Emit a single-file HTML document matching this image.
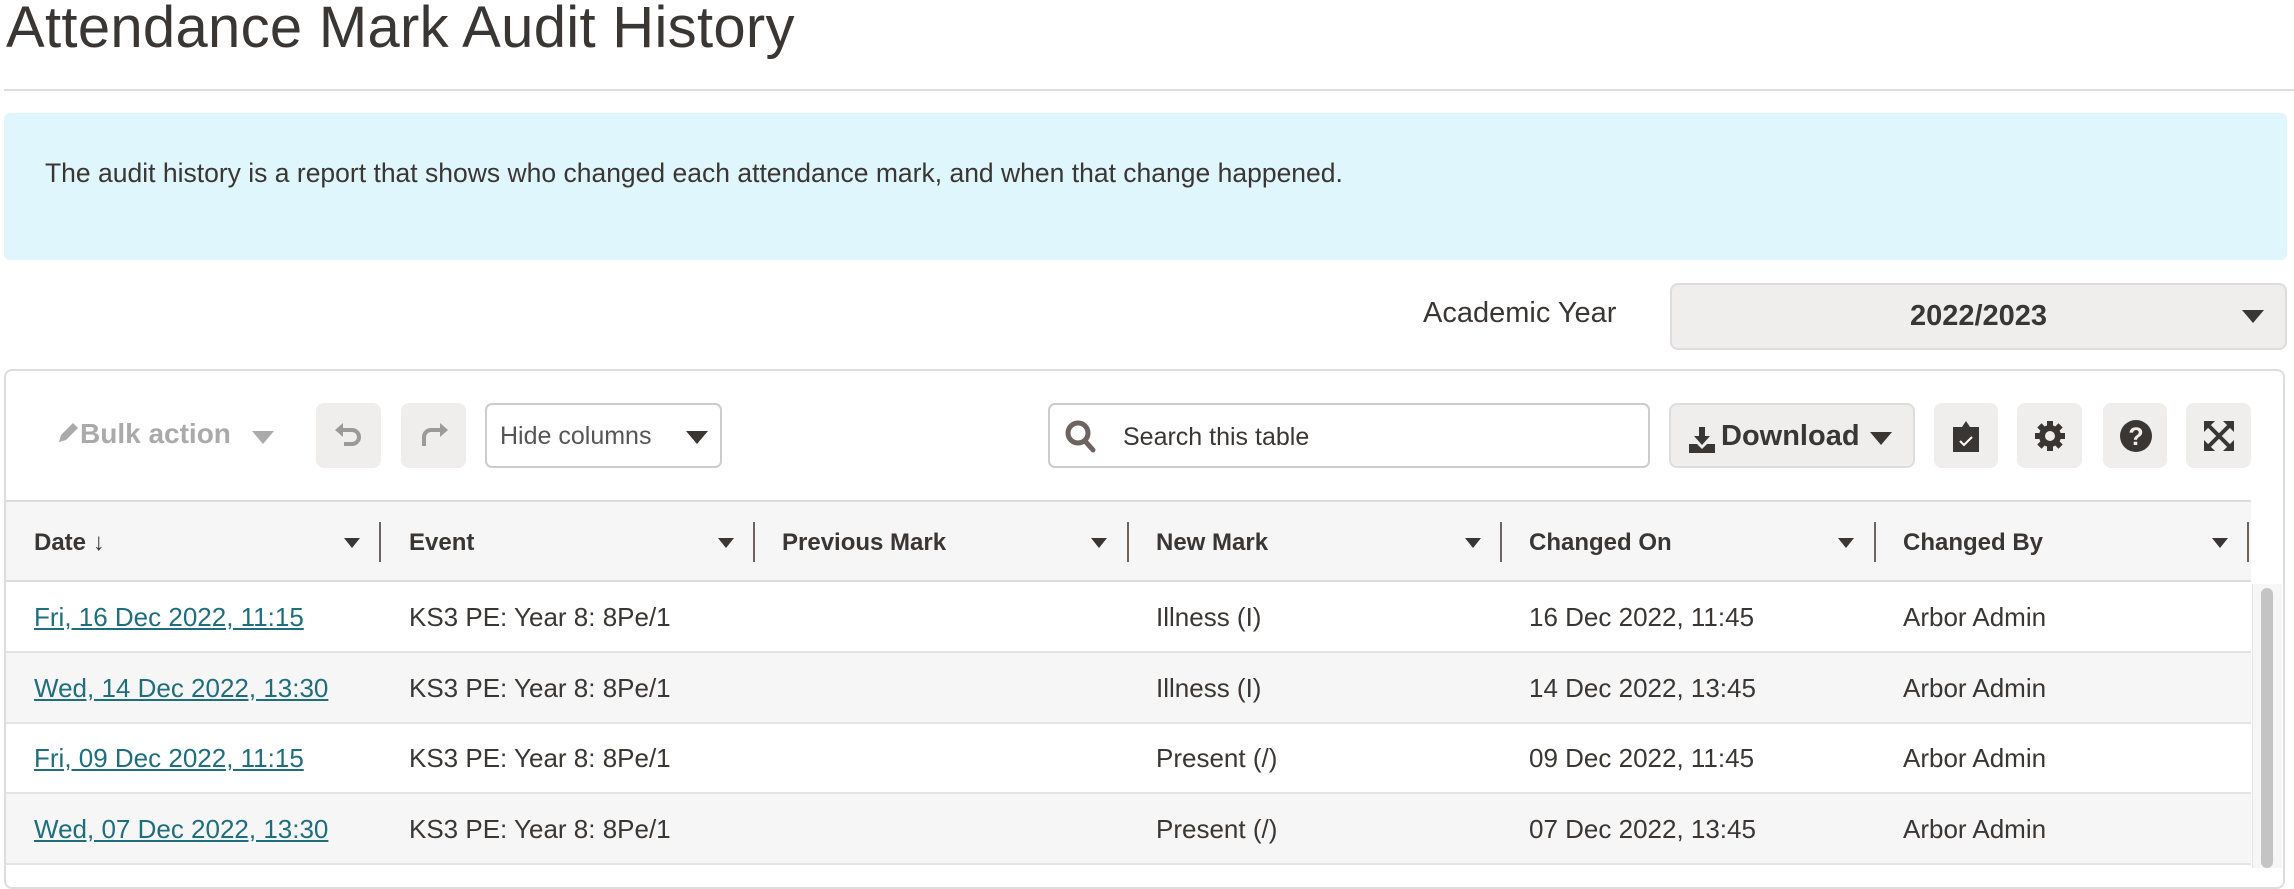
<!DOCTYPE html>
<html><head><meta charset="utf-8"><style>
*{box-sizing:border-box;margin:0;padding:0}
body{width:2294px;height:868px;overflow:hidden;background:#fff;font-family:"Liberation Sans",sans-serif;color:#3a3634;position:relative}
.a{position:absolute}
h1{position:absolute;left:6px;top:-6px;font-size:58px;font-weight:normal;letter-spacing:0.3px;color:#3a3634}
.hr{left:4px;top:89px;width:2290px;height:2px;background:#ddd}
.info{left:4px;top:113px;width:2283px;height:147px;background:#e0f6fd;border-radius:6px;font-size:26.5px;padding:45px 0 0 41px}
.lbl{left:1423px;top:297px;font-size:29px}
.sel{left:1670px;top:283px;width:617px;height:67px;background:#efeeed;border:2px solid #ddd;border-radius:8px;font-size:29px;font-weight:bold;text-align:center;line-height:63px}
.tri{width:0;height:0;border-left:11px solid transparent;border-right:11px solid transparent;border-top:13px solid #3a3634}
.card{left:4px;top:369px;width:2281px;height:520px;border:2px solid #ddd;border-radius:8px}
.btn{background:#efeeed;border-radius:8px;height:65px;top:403px}
.hc{left:485px;top:403px;width:237px;height:65px;border:2px solid #ccc;border-radius:7px;font-size:25px;color:#555;padding:17px 0 0 13px}
.srch{left:1048px;top:403px;width:602px;height:65px;border:2px solid #ccc;border-radius:7px;font-size:25px;padding:18px 0 0 73px}
.dl{left:1669px;width:246px;border:2px solid #ddd;font-size:29px;font-weight:bold;padding:15px 0 0 50px}
.head{left:6px;top:500px;width:2245px;height:82px;background:#f6f6f6;border-top:2px solid #ddd;border-bottom:2px solid #ddd}
.th{position:absolute;top:27px;font-size:24px;font-weight:bold}
.sep{position:absolute;top:20px;width:2px;height:40px;background:#6d6360}
.row{position:absolute;left:6px;width:2245px;height:71px;border-bottom:2px solid #e4e4e4;font-size:26px}
.row span{position:absolute;top:20px}
.row a{color:#1f6e7e;text-decoration:underline}
.alt{background:#f6f6f6}
</style></head><body>
<h1>Attendance Mark Audit History</h1>
<div class="a hr"></div>
<div class="a info">The audit history is a report that shows who changed each attendance mark, and when that change happened.</div>
<div class="a lbl">Academic Year</div>
<div class="a sel">2022/2023<div class="tri a" style="left:570px;top:25px"></div></div>
<div class="a card"></div>
<div class="a" style="left:56px;top:418px;font-size:28px;font-weight:bold;color:#aaa">
<svg width="24" height="24" viewBox="0 0 24 24" style="vertical-align:-2px"><path d="M3 21l2-7L17 2l5 5L10 19z" fill="#aaa"/></svg>Bulk action</div>
<div class="tri a" style="left:252px;top:431px;border-top-color:#aaa"></div>
<div class="a btn" style="left:316px;width:65px"><svg class="a" style="left:18px;top:19px" width="30" height="28" viewBox="0 0 30 28"><path d="M4 8h14a7 7 0 0 1 0 14h-8" stroke="#9a9a9a" stroke-width="4" fill="none"/><path d="M1 8l8-7v14z" fill="#9a9a9a"/></svg></div>
<div class="a btn" style="left:401px;width:65px"><svg class="a" style="left:18px;top:19px" width="30" height="28" viewBox="0 0 30 28"><path d="M26 8H12a7 7 0 0 0-7 7v9" stroke="#9a9a9a" stroke-width="4" fill="none"/><path d="M29 8l-8-7v14z" fill="#9a9a9a"/></svg></div>
<div class="a hc">Hide columns<div class="tri a" style="left:199px;top:26px;border-top-color:#3a3634"></div></div>
<div class="a srch"><svg class="a" style="left:14px;top:14px" width="34" height="36" viewBox="0 0 34 36"><circle cx="14" cy="14" r="10" stroke="#6d6360" stroke-width="5" fill="none"/><path d="M21 22l8 9" stroke="#6d6360" stroke-width="5" stroke-linecap="round"/></svg>Search this table</div>
<div class="a btn dl"><svg class="a" style="left:18px;top:22px" width="26" height="26" viewBox="0 0 26 26"><path d="M10 0h6v9h5l-8 9-8-9h5z" fill="#3a3634"/><path d="M0 17h8l5 5 5-5h8v9H0z" fill="#3a3634"/></svg>Download<div class="tri a" style="left:199px;top:27px"></div></div>
<div class="a btn" style="left:1934px;width:64px"><svg class="a" style="left:17px;top:17px" width="30" height="32" viewBox="0 0 30 32"><path d="M2 7h9l4-6 4 6h9v25H2z" fill="#3a3634"/><path d="M9 21l4 4 8-8" stroke="#fff" stroke-width="2" fill="none"/></svg></div>
<div class="a btn" style="left:2017px;width:65px"><svg class="a" style="left:17px;top:17px" width="32" height="32" viewBox="0 0 32 32"><g fill="#3a3634"><circle cx="16" cy="16" r="11"/><rect x="13" y="1" width="6" height="30"/><rect x="1" y="13" width="30" height="6"/><rect x="13" y="1" width="6" height="30" transform="rotate(45 16 16)"/><rect x="13" y="1" width="6" height="30" transform="rotate(-45 16 16)"/></g><circle cx="16" cy="16" r="5" fill="#efeeed"/></svg></div>
<div class="a btn" style="left:2103px;width:64px"><svg class="a" style="left:16px;top:16px" width="34" height="34" viewBox="0 0 34 34"><circle cx="17" cy="17" r="16" fill="#3a3634"/><text x="17" y="26" font-size="25" font-weight="bold" fill="#efeeed" text-anchor="middle" font-family="Liberation Sans">?</text></svg></div>
<div class="a btn" style="left:2186px;width:65px"><svg class="a" style="left:16px;top:16px" width="34" height="34" viewBox="0 0 34 34"><path d="M6 6l22 22M28 6L6 28" stroke="#3a3634" stroke-width="4"/><path d="M2 2h11L2 13zM32 2H21l11 11zM2 32h11L2 21zM32 32H21l11-11z" fill="#3a3634"/></svg></div>
<div class="a head">
<div class="th" style="left:28px">Date <span style="font-weight:normal">↓</span></div>
<div class="th" style="left:403px">Event</div>
<div class="th" style="left:776px">Previous Mark</div>
<div class="th" style="left:1150px">New Mark</div>
<div class="th" style="left:1523px">Changed On</div>
<div class="th" style="left:1897px">Changed By</div>
<div class="tri a" style="left:338px;top:36px;border-width:10px 8px 0"></div><div class="sep" style="left:373px"></div>
<div class="tri a" style="left:712px;top:36px;border-width:10px 8px 0"></div><div class="sep" style="left:747px"></div>
<div class="tri a" style="left:1085px;top:36px;border-width:10px 8px 0"></div><div class="sep" style="left:1121px"></div>
<div class="tri a" style="left:1459px;top:36px;border-width:10px 8px 0"></div><div class="sep" style="left:1494px"></div>
<div class="tri a" style="left:1832px;top:36px;border-width:10px 8px 0"></div><div class="sep" style="left:1868px"></div>
<div class="tri a" style="left:2206px;top:36px;border-width:10px 8px 0"></div><div class="sep" style="left:2241px"></div>
</div>
<div class="row" style="top:582px"><span style="left:28px"><a>Fri, 16 Dec 2022, 11:15</a></span><span style="left:403px">KS3 PE: Year 8: 8Pe/1</span><span style="left:1150px">Illness (I)</span><span style="left:1523px">16 Dec 2022, 11:45</span><span style="left:1897px">Arbor Admin</span></div>
<div class="row alt" style="top:653px"><span style="left:28px"><a>Wed, 14 Dec 2022, 13:30</a></span><span style="left:403px">KS3 PE: Year 8: 8Pe/1</span><span style="left:1150px">Illness (I)</span><span style="left:1523px">14 Dec 2022, 13:45</span><span style="left:1897px">Arbor Admin</span></div>
<div class="row" style="top:723px"><span style="left:28px"><a>Fri, 09 Dec 2022, 11:15</a></span><span style="left:403px">KS3 PE: Year 8: 8Pe/1</span><span style="left:1150px">Present (/)</span><span style="left:1523px">09 Dec 2022, 11:45</span><span style="left:1897px">Arbor Admin</span></div>
<div class="row alt" style="top:794px"><span style="left:28px"><a>Wed, 07 Dec 2022, 13:30</a></span><span style="left:403px">KS3 PE: Year 8: 8Pe/1</span><span style="left:1150px">Present (/)</span><span style="left:1523px">07 Dec 2022, 13:45</span><span style="left:1897px">Arbor Admin</span></div>
<div class="a" style="left:2252px;top:584px;width:30px;height:284px;background:#f6f6f6;border-left:1px solid #e4e4e4"></div>
<div class="a" style="left:2261px;top:588px;width:12px;height:280px;background:#c4c4c4;border-radius:6px"></div>
</body></html>
